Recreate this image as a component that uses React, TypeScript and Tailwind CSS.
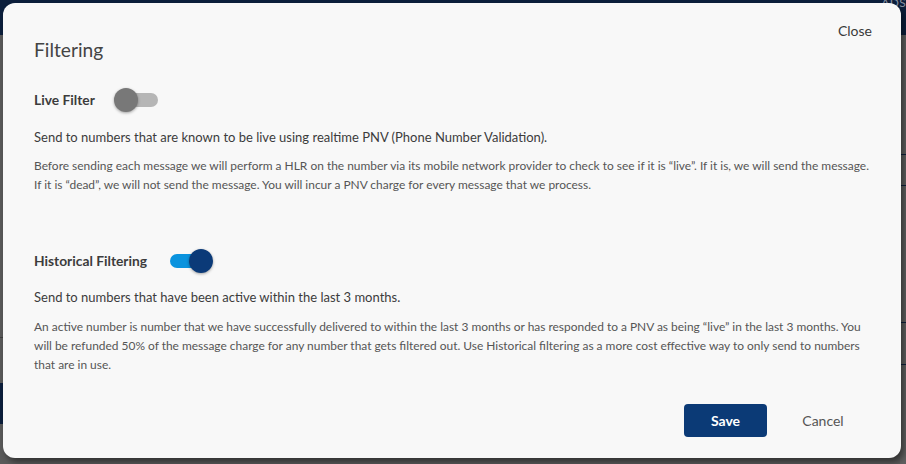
import React from "react";

function Toggle({ on }: { on: boolean }) {
  return (
    <div className="relative h-[24px] w-[44px] flex items-center">
      <div
        className={
          "h-[14px] w-[42px] rounded-full ml-[2px] " +
          (on ? "bg-[#0a93de]" : "bg-[#b6b6b6]")
        }
      />
      <div
        className={
          "absolute top-0 h-[24px] w-[24px] rounded-full shadow-[0_1px_3px_rgba(0,0,0,0.35)] " +
          (on ? "left-[21px] bg-[#0b3a78]" : "left-0 bg-[#787878]")
        }
      />
    </div>
  );
}

export default function App() {
  return (
    <div className="relative w-[906px] h-[464px] overflow-hidden bg-[#5a5a5a] font-['Lato','Noto_Sans',sans-serif]">
      {/* darkened page behind the dialog */}
      <div className="flex flex-col h-full">
        <div className="h-[35px] bg-[#0c1f3c] flex justify-end items-start">
          <span className="text-[12px] leading-[10px] text-[#8a93a3] mt-[-2px] tracking-wide">ADS</span>
        </div>
        <div className="flex-1 flex justify-between">
          <div className="w-[3px] flex flex-col">
            <div className="h-[302px]" />
            <div className="h-px bg-[#3e3e3e]" />
            <div className="h-[45px]" />
            <div className="h-[41px] bg-[#0c1f3c]" />
          </div>
          <div className="w-[6px] flex flex-col bg-[#606060]">
            <div className="h-[119px]" />
            <div className="h-px bg-[#0c1f3c]" />
            <div className="h-[30px]" />
            <div className="h-px bg-[#0c1f3c]" />
            <div className="h-[136px]" />
            <div className="h-px bg-[#0c1f3c]" />
            <div className="h-[41px]" />
            <div className="h-px bg-[#0c1f3c]" />
          </div>
        </div>
      </div>

      {/* dialog */}
      <div className="absolute left-[3px] top-[3px] w-[898px] h-[455px] rounded-[12px] bg-[#f8f8f8] shadow-[3px_4px_6px_rgba(0,0,0,0.45)] pl-[31px] pr-[25px] flex flex-col">
        <div className="flex justify-between items-start">
          <h2 className="mt-[35px] text-[19.2px] leading-[24px] text-[#444444] font-normal">Filtering</h2>
          <button className="mt-[18px] mr-[4px] text-[14px] leading-[20px] text-[#3a3a3a]">Close</button>
        </div>

        <div className="mt-[26px] flex items-center h-[24px]">
          <span className="text-[13.8px] font-bold text-[#3c3c3c]">Live Filter</span>
          <div className="ml-[19px]">
            <Toggle on={false} />
          </div>
        </div>
        <p className="mt-[15px] text-[13px] leading-[20px] text-[#3c3c3c]">
          Send to numbers that are known to be live using realtime PNV (Phone Number Validation).
        </p>
        <p className="mt-[9px] text-[11.95px] leading-[19px] text-[#555555]">
          Before sending each message we will perform a HLR on the number via its mobile network provider to check to see if it is “live”. If it is, we will send the message. If it is “dead”, we will not send the message. You will incur a PNV charge for every message that we process.
        </p>

        <div className="mt-[55px] flex items-center h-[24px]">
          <span className="text-[13.8px] font-bold text-[#3c3c3c]">Historical Filtering</span>
          <div className="ml-[21px]">
            <Toggle on={true} />
          </div>
        </div>
        <p className="mt-[14px] text-[13px] leading-[20px] text-[#3c3c3c]">
          Send to numbers that have been active within the last 3 months.
        </p>
        <p className="mt-[10px] pr-[6px] text-[11.95px] leading-[19px] text-[#555555]">
          An active number is number that we have successfully delivered to within the last 3 months or has responded to a PNV as being “live” in the last 3 months. You will be refunded 50% of the message charge for any number that gets filtered out. Use Historical filtering as a more cost effective way to only send to numbers that are in use.
        </p>

        <div className="mt-[30px] flex justify-end pr-[11px]">
          <button className="w-[83px] h-[33px] rounded-[4px] bg-[#0b3a76] text-white text-[14px] font-bold">Save</button>
          <button className="ml-[14px] w-[84px] h-[33px] text-[14px] text-[#555555]">Cancel</button>
        </div>
      </div>
    </div>
  );
}
